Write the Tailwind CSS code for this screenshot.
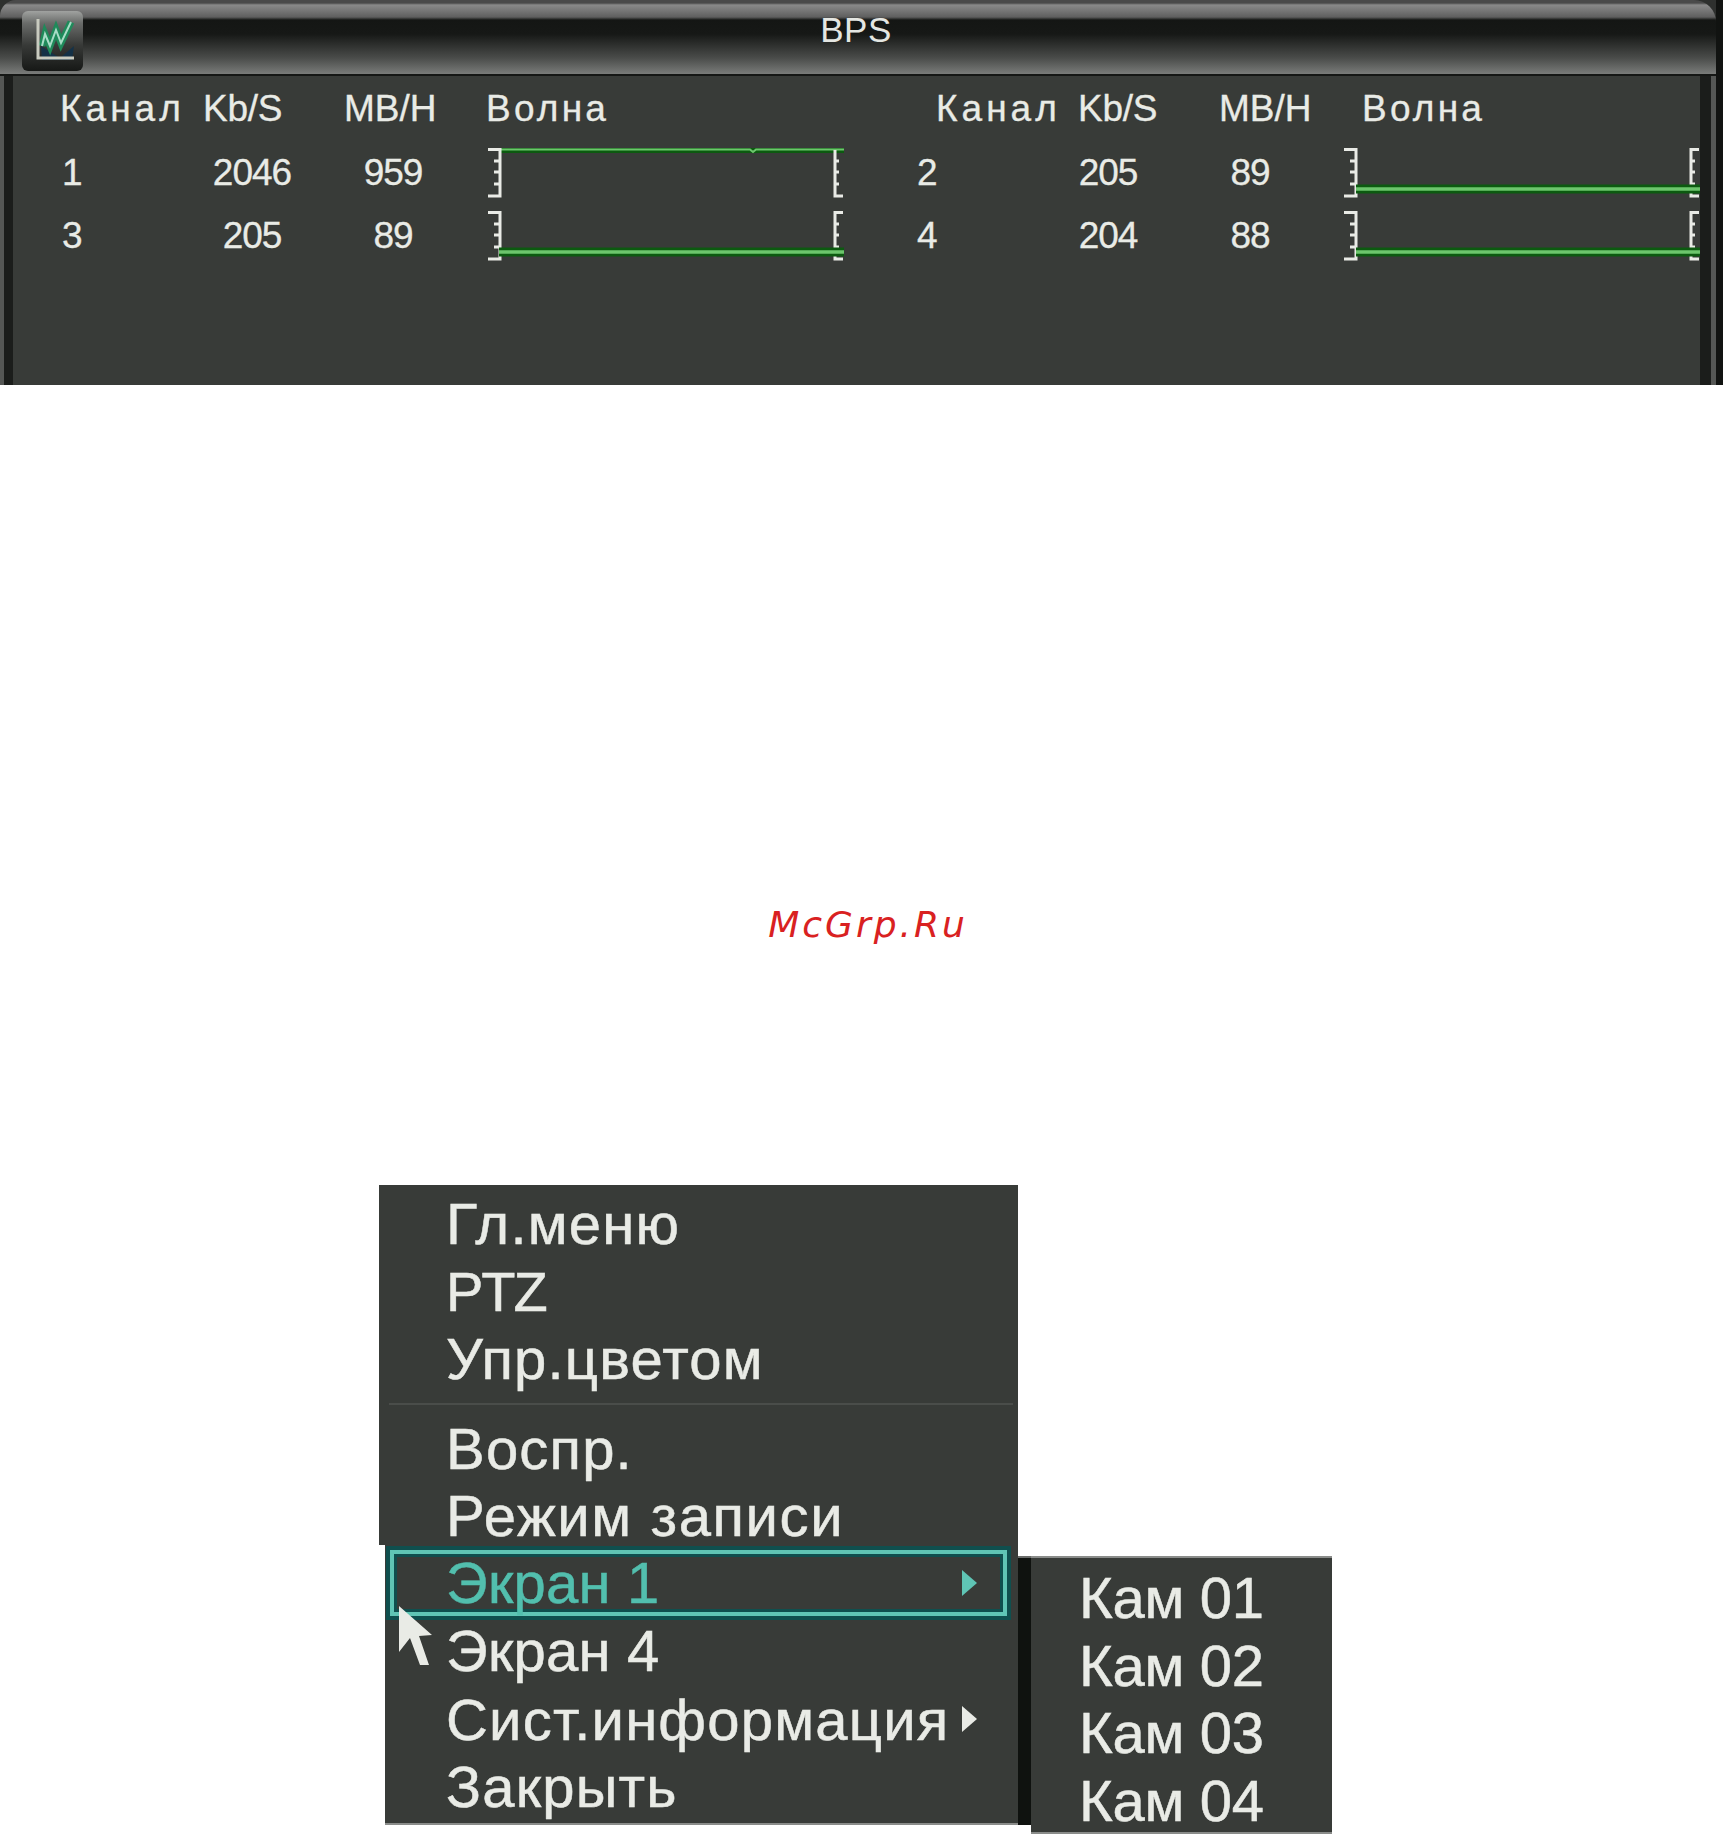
<!DOCTYPE html>
<html lang="ru">
<head>
  <meta charset="UTF-8" />
  <title>BPS</title>
  <script src="https://cdn.jsdelivr.net/npm/@tailwindcss/browser@4"></script>
</head>
<body class="bg-white">
<div class="relative w-[1723px] h-[1846px] overflow-hidden bg-white font-['Liberation_Sans',Arial,sans-serif]">

  <!-- BPS window -->
  <div class="h-[385px] bg-[#111311]">
    <div class="h-[385px] w-[1716px] flex flex-col bg-[#2e302e]">
      <!-- title bar -->
      <div class="h-[76px] shrink-0 flex items-start rounded-tl-[16px] rounded-tr-[22px] border-b-2 border-[#151715] bg-[linear-gradient(to_bottom,#4a4a4a_0px,#4a4a4a_3px,#8a8a8a_5px,#5f5f5f_17px,#141614_20px,#161816_34px,#4a4c4a_58px,#7a7c7a_74px)]">
        <div class="ml-[22px] mt-[11px] w-[61px] h-[60px] rounded-[6px] shrink-0 flex items-center justify-center bg-[linear-gradient(to_bottom,#a0a2a0_0px,#6a6c6a_12px,#383a38_34px,#161816_60px)]">
          <svg width="50" height="50" viewBox="0 0 50 50" fill="none">
            <path d="M13 30 L32 42 L46 30 L44 44 L14 44 Z" fill="#12324a" opacity="0.9"/>
            <path d="M14 30 L17 18 L22 30 L28 14 L33 27 L43 6" stroke="#1f8a5a" stroke-width="7"/>
            <path d="M14 30 L17 18 L22 30 L28 14 L33 27 L43 6" stroke="#a8dcc6" stroke-width="2"/>
            <path d="M10 3 V42 H46" stroke="#c9cbc0" stroke-width="3"/>
          </svg>
        </div>
        <div class="flex-1 text-center text-[#e4e6e2] text-[35px] tracking-[0.5px] leading-[60px] pr-[87px]">BPS</div>
      </div>

      <div class="flex-1 flex min-h-0">
        <div class="w-[4px] bg-[#555755]"></div>
        <div class="w-[9px] bg-[#1b1d1b]"></div>
        <div class="w-[1687px] bg-[#383b38] text-[#e9ebe6] text-[37px] [-webkit-text-stroke:0.3px_currentColor]">
          <!-- header -->
          <div class="h-[65px] flex items-center pl-[47px]">
            <div class="w-[143px] tracking-[4px]">Канал</div>
            <div class="w-[141px] tracking-[-0.3px]">Kb/S</div>
            <div class="w-[142px]">MB/H</div>
            <div class="w-[450px] tracking-[3.2px]">Волна</div>
            <div class="w-[142px] tracking-[4px]">Канал</div>
            <div class="w-[141px] tracking-[-0.3px]">Kb/S</div>
            <div class="w-[143px]">MB/H</div>
            <div class="tracking-[3.2px]">Волна</div>
          </div>
          <!-- rows -->
          <div class="flex flex-col gap-[13px] mt-[7px] pl-[49px] tracking-[-1px]">
            <div class="h-[50px] flex items-center">
              <div class="w-[130px]">1</div>
              <div class="w-[120px] text-center">2046</div>
              <div class="w-[162px] text-center">959</div>
              <div class="ml-[14px] w-[356px] h-[50px]">
                <svg width="356" height="50" viewBox="0 0 356 50" fill="none">
                  <path d="M13 2 H356" stroke="#0c5a10" stroke-width="6"/>
                  <path d="M13 1.5 H262 L265 4 L268 1.5 H356" stroke="#6cc66c" stroke-width="2"/>
                  <path d="M0 1.5 H12 V48 H0 M6 13 H12 M6 24 H12 M6 36 H12" stroke="#e9ebe6" stroke-width="3"/>
                  <path d="M355 48 H347 V2 M347 13 H351 M347 24 H351 M347 36 H351" stroke="#e9ebe6" stroke-width="3"/>
                </svg>
              </div>
              <div class="ml-[73px] w-[131px]">2</div>
              <div class="w-[120px] text-center">205</div>
              <div class="w-[164px] text-center">89</div>
              <div class="ml-[12px] w-[356px] h-[50px]">
                <svg width="356" height="50" viewBox="0 0 356 50" fill="none">
                  <path d="M0 1.5 H12 V48 H0 M6 13 H12 M6 24 H12 M6 36 H12" stroke="#e9ebe6" stroke-width="3"/>
                  <path d="M355 1.5 H347 V48 H355 M347 13 H351 M347 24 H351 M347 36 H351" stroke="#e9ebe6" stroke-width="3"/>
                  <path d="M12 41 H356" stroke="#0c5a10" stroke-width="9"/>
                  <path d="M12 41 H356" stroke="#6cc66c" stroke-width="3.5"/>
                </svg>
              </div>
            </div>
            <div class="h-[50px] flex items-center">
              <div class="w-[130px]">3</div>
              <div class="w-[120px] text-center">205</div>
              <div class="w-[162px] text-center">89</div>
              <div class="ml-[14px] w-[356px] h-[50px]">
                <svg width="356" height="50" viewBox="0 0 356 50" fill="none">
                  <path d="M0 1.5 H12 V48 H0 M6 13 H12 M6 24 H12 M6 36 H12" stroke="#e9ebe6" stroke-width="3"/>
                  <path d="M355 1.5 H347 V48 H355 M347 13 H351 M347 24 H351 M347 36 H351" stroke="#e9ebe6" stroke-width="3"/>
                  <path d="M11 41 H356" stroke="#0c5a10" stroke-width="9"/>
                  <path d="M11 41 H356" stroke="#6cc66c" stroke-width="3.5"/>
                </svg>
              </div>
              <div class="ml-[73px] w-[131px]">4</div>
              <div class="w-[120px] text-center">204</div>
              <div class="w-[164px] text-center">88</div>
              <div class="ml-[12px] w-[356px] h-[50px]">
                <svg width="356" height="50" viewBox="0 0 356 50" fill="none">
                  <path d="M0 1.5 H12 V48 H0 M6 13 H12 M6 24 H12 M6 36 H12" stroke="#e9ebe6" stroke-width="3"/>
                  <path d="M355 1.5 H347 V48 H355 M347 13 H351 M347 24 H351 M347 36 H351" stroke="#e9ebe6" stroke-width="3"/>
                  <path d="M12 41 H356" stroke="#0c5a10" stroke-width="9"/>
                  <path d="M12 41 H356" stroke="#6cc66c" stroke-width="3.5"/>
                </svg>
              </div>
            </div>
          </div>
        </div>
        <div class="w-[11px] bg-[#1b1d1b]"></div>
        <div class="w-[5px] bg-[#555755]"></div>
      </div>
    </div>
  </div>

  <!-- watermark -->
  <div class="mt-[515px] h-[50px] pl-[13px] text-center text-[36px] leading-[50px] tracking-[3px] italic text-[#d92121] font-['DejaVu_Sans',sans-serif]">McGrp.Ru</div>

  <!-- context menu -->
  <div class="mt-[235px] ml-[379px] flex items-start text-[#e9ebe6] text-[58px] tracking-[1.2px] [-webkit-text-stroke:0.5px_currentColor]">
    <div class="w-[639px]">
      <div class="h-[360px] pt-[5px] pl-[67px] bg-[#383b38]">
        <div class="h-[67.5px] leading-[67.5px]">Гл.меню</div>
        <div class="h-[67.5px] leading-[67.5px] text-[56px] tracking-[-2px]">PTZ</div>
        <div class="h-[67.5px] leading-[67.5px]">Упр.цветом</div>
        <div class="h-[22px] -ml-[57px] mr-[5px] flex items-center"><div class="h-[2px] w-full bg-[#4a4d4a]"></div></div>
        <div class="h-[67.5px] leading-[67.5px]">Воспр.</div>
        <div class="h-[67.5px] leading-[67.5px] tracking-[1.6px]">Режим записи</div>
      </div>
      <div class="ml-[6px] h-[280px] pt-[5px] bg-[#383b38] border-b-2 border-[#8a8c8a]">
        <div class="ml-[5px] w-[617px] h-[66px] flex items-center justify-between pl-[52px] pr-[26px] border-[4px] border-[#5fc5b5] shadow-[0_0_0_4px_#0f4f4e,inset_0_0_0_3px_#0f4f4e] text-[#52bfae] tracking-[0.2px]">
          <span class="leading-[58px]">Экран 1</span>
          <svg width="15" height="26" viewBox="0 0 15 26"><path d="M0 0 L15 13 L0 26 Z" fill="#5fc5b5"/></svg>
        </div>
        <div class="h-[68px] mt-[1px] pl-[61px] leading-[68px] tracking-[0.2px]">Экран 4</div>
        <div class="h-[68px] flex items-center justify-between pl-[61px] pr-[41px]">
          <span>Сист.информация</span>
          <svg width="15" height="26" viewBox="0 0 15 26"><path d="M0 0 L15 13 L0 26 Z" fill="#e9ebe6"/></svg>
        </div>
        <div class="h-[68px] pl-[61px] leading-[68px]">Закрыть</div>
      </div>
    </div>
    <!-- submenu -->
    <div class="mt-[371px] flex items-start tracking-[-0.3px]">
      <div class="w-[13px] h-[269px] bg-[#0f120f] border-t-2 border-[#6a6c6a]"></div>
      <div class="w-[301px] h-[278px] pt-[6px] pl-[48px] bg-[#383b38] border-t-2 border-b-2 border-[#8a8c8a]">
        <div class="h-[67.5px] leading-[67.5px]">Кам 01</div>
        <div class="h-[67.5px] leading-[67.5px]">Кам 02</div>
        <div class="h-[67.5px] leading-[67.5px]">Кам 03</div>
        <div class="h-[67.5px] leading-[67.5px]">Кам 04</div>
      </div>
    </div>
  </div>

  <!-- mouse cursor -->
  <svg class="absolute left-[396px] top-[1604px]" width="40" height="64" viewBox="0 0 40 64">
    <path d="M3 2 V48 L14 34 L24 61 L33 61 L23 32 L36 31 Z" fill="#e9ebe6"/>
  </svg>
</div>
</body>
</html>
